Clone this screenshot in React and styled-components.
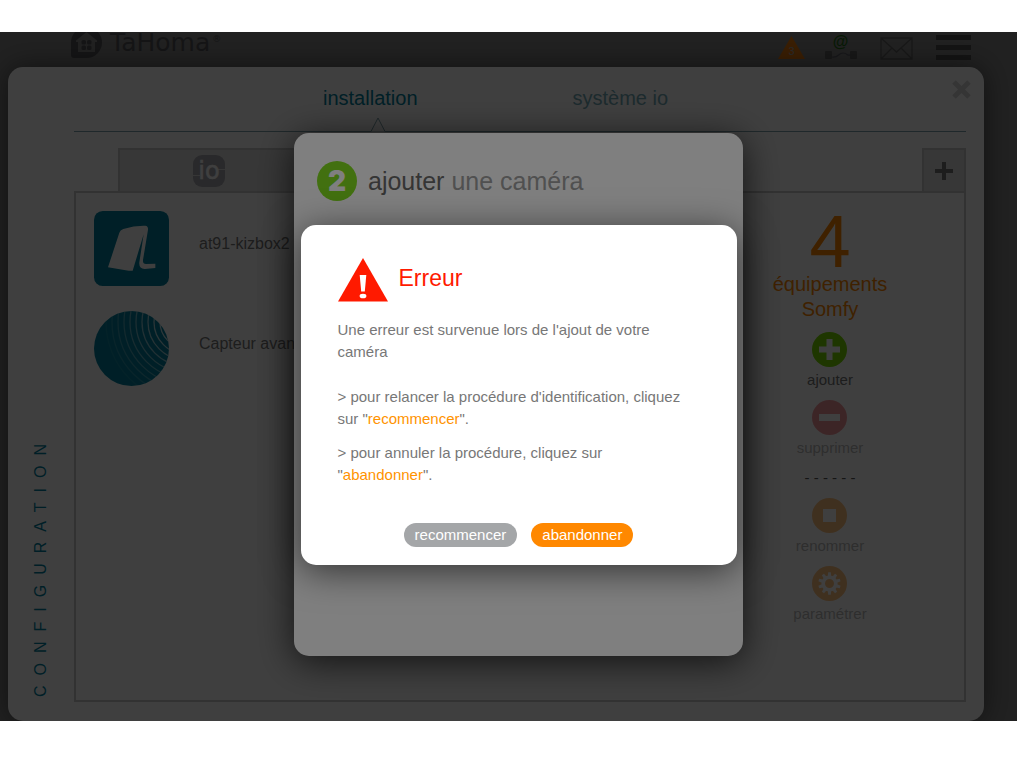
import React from "react"
import styled, { createGlobalStyle } from "styled-components"

const GlobalStyle = createGlobalStyle`
* {
    box-sizing: border-box;
}
body {
    margin: 0;
    background: #fff;
    font-family: "Liberation Sans", Arial, sans-serif;
    font-size: 15px;
    color: #747474;
}
button {
    border: 0;
    padding: 0;
    background: none;
    font: inherit;
    color: inherit;
    cursor: pointer;
}
a {
    text-decoration: none;
}
svg {
    display: block;
}
h1, h2, p, ul {
    margin: 0;
    padding: 0;
    font-weight: 400;
}
`

const Screen = styled.div`
position: relative;
display: flex;
flex-direction: column;
margin: 32px 7px 0 0;
background: #868686;
overflow: hidden;
`

const Header = styled.header`
display: flex;
align-items: flex-end;
justify-content: space-between;
height: 35px;
padding: 0 46px 7px 71px;
color: #545454;
`

const Brand = styled.a`
display: flex;
align-items: center;
gap: 8px;
padding-bottom: 2px;
color: #545458;
`

const BrandName = styled.span`
display: flex;
gap: 2px;
font-family: "DejaVu Sans", Verdana, sans-serif;
font-size: 25px;
line-height: 28px;
`

const Registered = styled.span`
font-size: 9px;
line-height: 20px;
`

const HeaderIcons = styled.nav`
display: flex;
align-items: flex-end;
gap: 23px;
`

const HeaderGroup = styled.div`
display: flex;
align-items: flex-end;
gap: 20px;
`

const Card = styled.main`
position: relative;
display: flex;
margin: 0 33px 0 8px;
padding: 0 18px 19px 0;
background: #fff;
border-radius: 15px;
box-shadow: 0 0 28px rgba(0, 0, 0, 0.5);
`

const CloseButton = styled.button`
position: absolute;
top: 13px;
right: 13px;
color: #d4d4d4;
`

const SideLabel = styled.div`
width: 66px;
padding-top: 5px;
writing-mode: vertical-rl;
transform: rotate(180deg);
font-size: 16px;
line-height: 66px;
letter-spacing: 10px;
color: #007f9c;
`

const Content = styled.div`
flex: 1;
min-width: 0;
`

const Tabs = styled.nav`
display: flex;
gap: 155px;
height: 65px;
padding: 19px 0 0 249px;
border-bottom: 1px solid #7fa3ad;
`

const Tab = styled.a`
display: flex;
flex-direction: column;
align-items: center;
justify-content: space-between;
font-size: 20px;
line-height: 24px;
color: ${props => props.$active ? "#007f9c" : "#74acb9"};
`

const SubTabs = styled.div`
display: flex;
justify-content: space-between;
margin-top: 16px;
padding-left: 44px;
`

const SubTab = styled.button`
display: flex;
align-items: center;
justify-content: center;
width: ${props => props.$wide ? "182px" : "44px"};
height: 43px;
background: #dedede;
border: 2px solid #cacaca;
border-bottom: 0;
color: #757575;
`

const Panel = styled.section`
display: flex;
justify-content: space-between;
min-height: 511px;
padding: 18px 0 0 18px;
border: 2px solid #cacaca;
`

const Devices = styled.ul`
display: flex;
flex-direction: column;
gap: 25px;
list-style: none;
`

const Device = styled.li`
display: flex;
gap: 30px;
font-size: 16px;
line-height: 66px;
color: #777;
`

const Side = styled.aside`
display: flex;
flex-direction: column;
align-items: center;
width: 268px;
padding-top: 1px;
`

const Count = styled.div`
font-size: 74px;
line-height: 60px;
color: #ff8600;
`

const CountLabel = styled.div`
width: 130px;
text-align: center;
font-size: 20px;
line-height: 25px;
color: #ff8600;
`

const Actions = styled.div`
display: flex;
flex-direction: column;
align-items: center;
gap: 10px;
margin-top: 10px;
`

const Action = styled.button`
display: flex;
flex-direction: column;
align-items: center;
gap: 3px;
line-height: 20px;
opacity: ${props => props.$faded ? 0.5 : 1};
`

const Dashes = styled.div`
line-height: 20px;
color: #555;
`

const Overlay = styled.div`
position: absolute;
inset: 0;
display: flex;
align-items: flex-start;
justify-content: center;
padding: ${props => props.$top} 0 0 20px;
background: rgba(0, 0, 0, 0.5);
`

const Modal = styled.section`
width: 449px;
min-height: 523px;
padding: 28px 23px;
background: #fff;
border-radius: 15px;
box-shadow: 0 6px 36px rgba(0, 0, 0, 0.7);
`

const ModalTitle = styled.h1`
display: flex;
align-items: center;
gap: 11px;
font-size: 25px;
line-height: 40px;
color: #a0a0a0;
b {
    font-weight: 400;
    color: #6a6a6a;
}
`

const Step = styled.span`
width: 40px;
height: 40px;
border-radius: 50%;
background: #84e020;
color: #fff;
text-align: center;
font-family: Inter, "Liberation Sans", sans-serif;
font-size: 28px;
font-weight: 900;
`

const Alert = styled.section`
width: 436px;
padding: 33px 50px 18px 37px;
background: #fff;
border-radius: 15px;
box-shadow: 0 6px 36px rgba(0, 0, 0, 0.6);
`

const AlertTitle = styled.h2`
display: flex;
align-items: flex-start;
gap: 11px;
font-size: 23px;
line-height: 40px;
color: #ff1a00;
`

const AlertText = styled.div`
display: flex;
flex-direction: column;
gap: 12px;
margin-top: 17px;
line-height: 22px;
color: #777;
`

const Lead = styled.p`
margin-bottom: 11px;
`

const Mark = styled.span`
color: #ff9300;
`

const Buttons = styled.div`
display: flex;
justify-content: center;
gap: 14px;
margin: 37px -13px 0 0;
`

const Pill = styled.button`
height: 24px;
padding: 0 11px;
border-radius: 12px;
background: ${props => props.$primary ? "#ff8800" : "#a4a6a8"};
color: #fff;
line-height: 22px;
`

const HomeLogo = () => (
    <svg width="31" height="31" viewBox="0 0 31 31">
        <path d="M15.500 0A15.500 15.500 0 0 1 15.500 31H3Q0 31 0 28V15.500A15.500 15.500 0 0 1 15.500 0Z" fill="currentColor" />
        <path d="M15.500 5L26 13.500V15H24V25H7V15H5V13.500Z" fill="#868686" />
        <g fill="currentColor">
            <rect x="10.500" y="13" width="4.500" height="4.500" rx="1.500" />
            <rect x="16" y="13" width="4.500" height="4.500" rx="1.500" />
            <rect x="10.500" y="18.500" width="4.500" height="4.500" rx="1.500" />
            <rect x="16" y="18.500" width="4.500" height="4.500" rx="1.500" />
        </g>
    </svg>
)

const WarningCount = () => (
    <svg width="27" height="24" viewBox="0 0 27 24">
        <path d="M13.500 0L27 23H0Z" fill="#e87a10" />
        <text x="13.500" y="19" textAnchor="middle" fontSize="11" fill="#aaa">3</text>
    </svg>
)

const NetworkIcon = () => (
    <svg width="32" height="28" viewBox="0 0 32 28">
        <text x="15.500" y="15" textAnchor="middle" fontSize="16" fontWeight="700" fill="#206a14">@</text>
        <rect x="0" y="19" width="7" height="8" rx="1" fill="#606060" />
        <rect x="25" y="19" width="7" height="8" rx="1" fill="#606060" />
        <path d="M7 25C14 26 13 21 18 21S21 24 25 23" fill="none" stroke="#5c5c68" strokeWidth="1.200" />
    </svg>
)

const MailIcon = () => (
    <svg width="33" height="23" viewBox="0 0 33 23">
        <path d="M1 1H32V22H1ZM1 1L16.500 15L32 1M1 22L12 11M32 22L21 11" fill="none" stroke="#606060" strokeWidth="1.300" />
    </svg>
)

const MenuIcon = () => (
    <svg width="35" height="25" viewBox="0 0 35 25">
        <path d="M0 2.500H35M0 12.500H35M0 22.500H35" stroke="#505050" strokeWidth="5" />
    </svg>
)

const CrossIcon = () => (
    <svg width="19" height="19" viewBox="0 0 19 19">
        <path d="M2 2L17 17M17 2L2 17" stroke="currentColor" strokeWidth="5" />
    </svg>
)

const Caret = styled(({ className }) => (
    <svg className={className} width="14" height="14" viewBox="0 0 14 14">
        <path d="M0 14.500L7 1L14 14.500" fill="#fff" stroke="#7fa3ad" />
    </svg>
))`
margin-left: 16px;
overflow: visible;
`

const IoIcon = () => (
    <svg width="32" height="32" viewBox="0 0 32 32">
        <rect width="32" height="32" rx="9" fill="#a6a6ac" />
        <path d="M0 20.500H7M25 14.500H32" stroke="#d8d8d8" />
        <text x="16" y="24" textAnchor="middle" fontSize="24" fontFamily="DejaVu Sans" fill="#fff" stroke="#fff" strokeWidth="0.500">io</text>
    </svg>
)

const BoxIcon = () => (
    <svg width="75" height="75" viewBox="0 0 225 225">
        <rect width="225" height="225" rx="26" fill="#007f9c" />
        <path d="M76 65Q78 57 88 54Q122 43 154 44Q163 45 162 56L147 147Q146 159 156 159L184 158V171L152 174Q134 173 136 154L149 70L116 179H104L42 169Z" fill="#fff" />
    </svg>
)

const rings = [0, 1, 2, 3, 4, 5, 6, 7, 8, 9]

const SensorIcon = () => (
    <svg width="75" height="75" viewBox="0 0 75 75">
        <clipPath id="disc"><circle cx="37.500" cy="37.500" r="37.500" /></clipPath>
        <circle cx="37.500" cy="37.500" r="37.500" fill="#007f9c" />
        <g clipPath="url(#disc)" fill="none" stroke="#fff" strokeWidth="1.300">
            {rings.map(i => (
                <circle key={i} cx="92" cy="11" r={26 + i * 6} opacity={0.75 - i * 0.075} />
            ))}
        </g>
    </svg>
)

const Disc = ({ color, children }) => (
    <svg width="35" height="35" viewBox="0 0 35 35">
        <circle cx="17.500" cy="17.500" r="17.500" fill={color} />
        {children}
    </svg>
)

const teeth = [0, 36, 72, 108, 144, 180, 216, 252, 288, 324]

const Gear = () => (
    <g>
        {teeth.map(a => (
            <path key={a} d="M15.800 10L16.200 6.300H18.800L19.200 10Z" fill="#fff" transform={`rotate(${a} 17.500 17.500)`} />
        ))}
        <circle cx="17.500" cy="17.500" r="6.300" fill="none" stroke="#fff" strokeWidth="3.600" />
    </g>
)

const ErrorIcon = () => (
    <svg width="50" height="44" viewBox="0 0 50 44">
        <path d="M25 0L50 43.500H0Z" fill="#ff1a00" />
        <path d="M21.700 17H28.300L26.800 33.500H23.200Z" fill="#fff" />
        <ellipse cx="25" cy="38" rx="3.400" ry="2.300" fill="#fff" />
    </svg>
)

const App = () => {
    return (
        <Screen>
            <GlobalStyle />
            <Header>
                <Brand href="#">
                    <HomeLogo />
                    <BrandName>TaHoma<Registered>®</Registered></BrandName>
                </Brand>
                <HeaderIcons>
                    <HeaderGroup>
                        <button aria-label="Alertes"><WarningCount /></button>
                        <button aria-label="Connexion"><NetworkIcon /></button>
                    </HeaderGroup>
                    <button aria-label="Messages"><MailIcon /></button>
                    <button aria-label="Menu"><MenuIcon /></button>
                </HeaderIcons>
            </Header>

            <Card>
                <SideLabel>CONFIGURATION</SideLabel>
                <Content>
                    <Tabs>
                        <Tab href="#" $active>installation<Caret /></Tab>
                        <Tab href="#">système io</Tab>
                    </Tabs>
                    <SubTabs>
                        <SubTab $wide aria-label="io"><IoIcon /></SubTab>
                        <SubTab aria-label="Ajouter un onglet">
                            <svg width="18" height="18" viewBox="0 0 18 18">
                                <path d="M9 0V18M0 9H18" stroke="currentColor" strokeWidth="4" />
                            </svg>
                        </SubTab>
                    </SubTabs>
                    <Panel>
                        <Devices>
                            <Device><BoxIcon />at91-kizbox2</Device>
                            <Device><SensorIcon />Capteur avant</Device>
                        </Devices>
                        <Side>
                            <Count>4</Count>
                            <CountLabel>équipements Somfy</CountLabel>
                            <Actions>
                                <Action>
                                    <Disc color="#78d800"><path d="M17.500 7V28M7 17.500H28" stroke="#fff" strokeWidth="6" /></Disc>
                                    ajouter
                                </Action>
                                <Action $faded>
                                    <Disc color="#e8303a"><path d="M7 17.500H28" stroke="#fff" strokeWidth="7" /></Disc>
                                    supprimer
                                </Action>
                                <Dashes>- - - - - -</Dashes>
                                <Action $faded>
                                    <Disc color="#ff8600"><rect x="11" y="11" width="13" height="13" fill="#fff" /></Disc>
                                    renommer
                                </Action>
                                <Action $faded>
                                    <Disc color="#ff8600"><Gear /></Disc>
                                    paramétrer
                                </Action>
                            </Actions>
                        </Side>
                    </Panel>
                </Content>
                <CloseButton aria-label="Fermer"><CrossIcon /></CloseButton>
            </Card>

            <Overlay $top="101px">
                <Modal>
                    <ModalTitle><Step>2</Step><span><b>ajouter</b> une caméra</span></ModalTitle>
                </Modal>
            </Overlay>

            <Overlay $top="193px">
                <Alert role="alertdialog" aria-labelledby="alert-title">
                    <AlertTitle id="alert-title"><ErrorIcon />Erreur</AlertTitle>
                    <AlertText>
                        <Lead>Une erreur est survenue lors de l'ajout de votre caméra</Lead>
                        <p>&gt; pour relancer la procédure d'identification, cliquez sur "<Mark>recommencer</Mark>".</p>
                        <p>&gt; pour annuler la procédure, cliquez sur "<Mark>abandonner</Mark>".</p>
                    </AlertText>
                    <Buttons>
                        <Pill>recommencer</Pill>
                        <Pill $primary>abandonner</Pill>
                    </Buttons>
                </Alert>
            </Overlay>
        </Screen>
    )
}

export default App
